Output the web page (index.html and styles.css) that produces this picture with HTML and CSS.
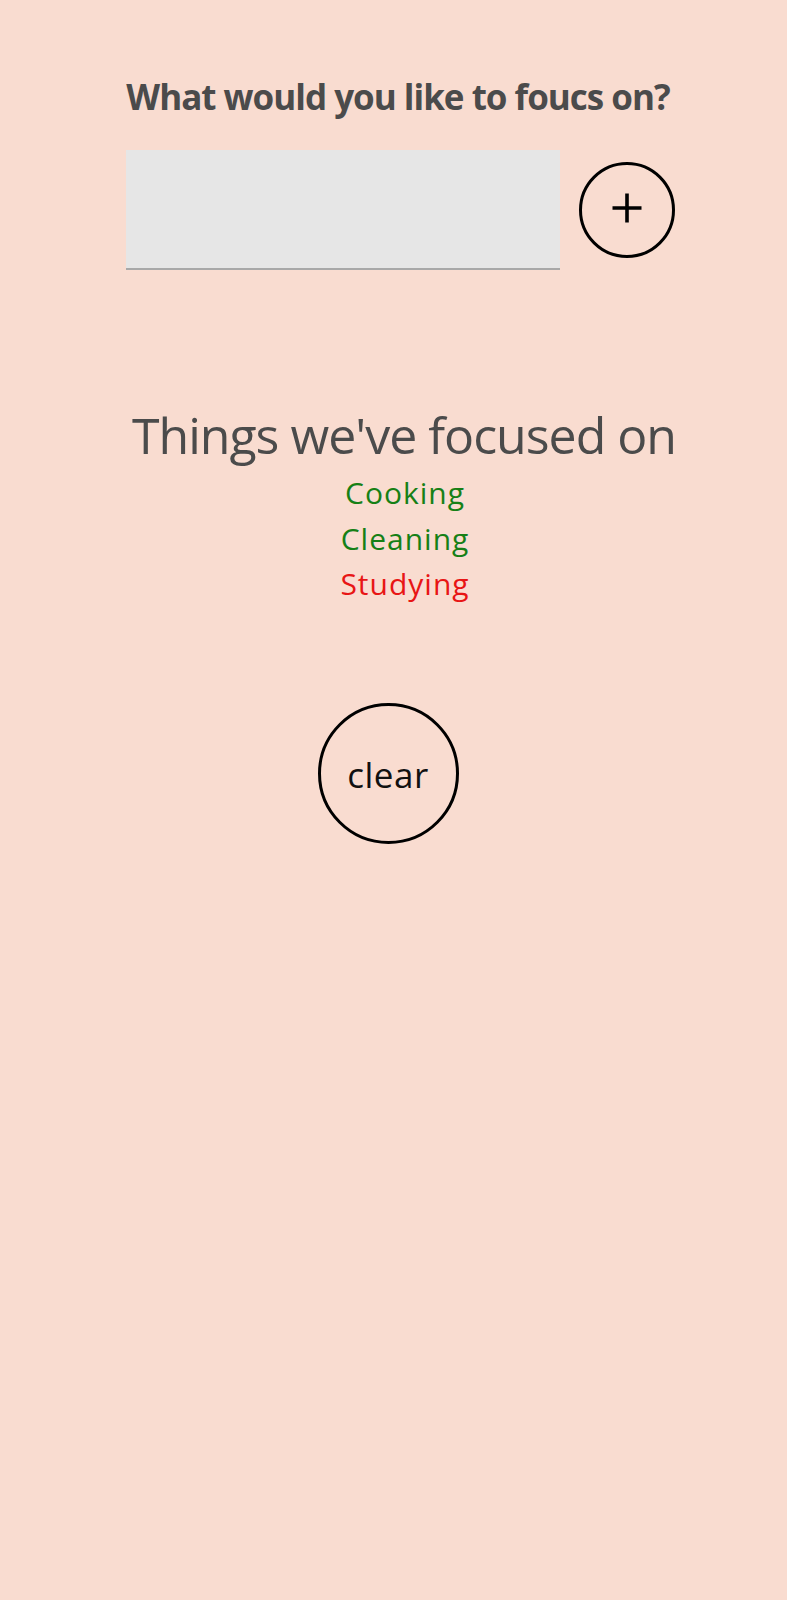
FILE: index.html
```html
<!DOCTYPE html>
<html>
<head>
<meta charset="utf-8">
<title>Focus</title>
<link rel="stylesheet" href="styles.css">
</head>
<body>
<main class="screen">
  <h1 class="prompt">What would you like to foucs on?</h1>
  <div class="entry-row">
    <div class="text-field"></div>
    <button class="add-btn" aria-label="add">
      <svg width="32" height="32" viewBox="0 0 32 32"><path d="M16 1.5V30.5M1.5 16H30.5" stroke="#000" stroke-width="3.6" fill="none"/></svg>
    </button>
  </div>
  <h2 class="history-title">Things we've focused on</h2>
  <ul class="history">
    <li class="item done">Cooking</li>
    <li class="item done">Cleaning</li>
    <li class="item missed">Studying</li>
  </ul>
  <button class="clear-btn">clear</button>
</main>
</body>
</html>
```
FILE: styles.css
```css
* { box-sizing: border-box; }
html, body { margin: 0; padding: 0; }
body {
  background: #f9dcd0;
  font-family: "Open Sans", "Noto Sans", sans-serif;
  min-height: 1600px;
}
.screen {
  display: flex;
  flex-direction: column;
  align-items: center;
  padding-top: 75px;
}
.prompt {
  margin: 0 0 0 9px;
  font-size: 35px;
  line-height: 44px;
  letter-spacing: -1px;
  font-weight: 700;
  color: #4b4b4b;
}
.entry-row {
  display: flex;
  align-items: center;
  gap: 19px;
  margin: 31px 0 0 14px;
}
.text-field {
  width: 434px;
  height: 120px;
  background: #e6e6e6;
  border-bottom: 2px solid #a8a8a8;
}
.add-btn {
  width: 96px;
  height: 96px;
  border: 3px solid #000;
  border-radius: 50%;
  background: transparent;
  padding: 0 0 4px 0;
  display: flex;
  align-items: center;
  justify-content: center;
}
.history-title {
  margin: 135px 0 0 21px;
  font-size: 50px;
  line-height: 60px;
  letter-spacing: -1px;
  font-weight: 400;
  color: #4b4b4b;
}
.history {
  list-style: none;
  margin: 5px 0 0 23px;
  padding: 0;
  text-align: center;
}
.item {
  font-size: 30px;
  line-height: 45.5px;
  letter-spacing: 1px;
}
.done { color: #168016; }
.missed { color: #e81515; }
.clear-btn {
  margin: 96px 11px 0 0;
  width: 141px;
  height: 141px;
  border: 3px solid #000;
  border-radius: 50%;
  background: transparent;
  padding: 3px 0 0 0;
  font-family: inherit;
  font-size: 35px;
  letter-spacing: 0.5px;
  color: #111;
  display: flex;
  align-items: center;
  justify-content: center;
}
```
